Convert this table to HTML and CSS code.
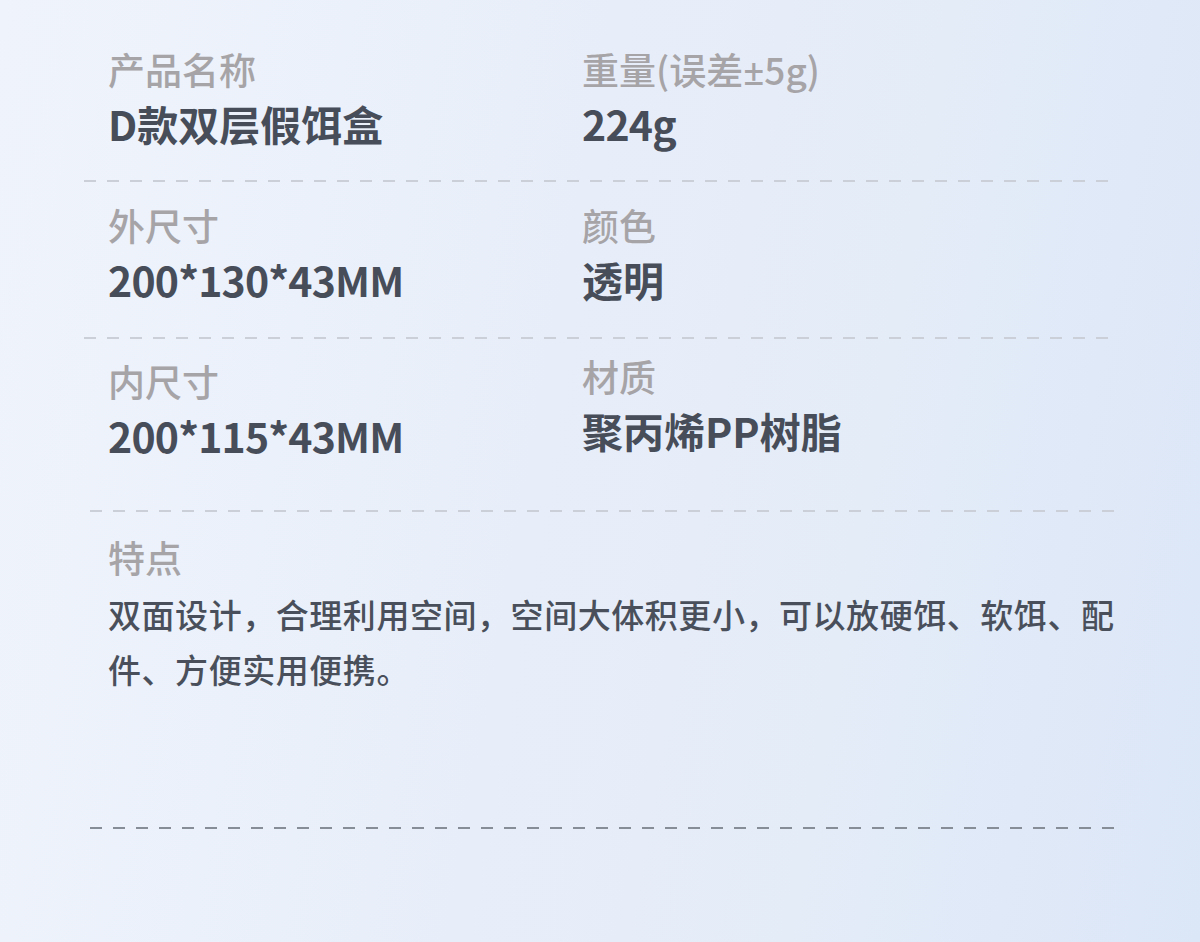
FILE: index.html
```html
<!DOCTYPE html>
<html lang="zh-CN">
<head>
  <meta charset="UTF-8" />
  <meta name="viewport" content="width=device-width, initial-scale=1" />
  <title>产品参数</title>
  <link rel="stylesheet" href="styles.css">
</head>
<body>
  <div class="spec-sheet">
    <div class="spec-row row-1">
      <div class="spec-cell">
        <div class="spec-label">产品名称</div>
        <div class="spec-value">D款双层假饵盒</div>
      </div>
      <div class="spec-cell">
        <div class="spec-label">重量(误差<span class="sym">±</span>5g)</div>
        <div class="spec-value num">224g</div>
      </div>
    </div>
    <div class="divider div-1"></div>

    <div class="spec-row row-2">
      <div class="spec-cell">
        <div class="spec-label">外尺寸</div>
        <div class="spec-value num">200*130*43MM</div>
      </div>
      <div class="spec-cell">
        <div class="spec-label">颜色</div>
        <div class="spec-value">透明</div>
      </div>
    </div>
    <div class="divider div-2"></div>

    <div class="spec-row row-3">
      <div class="spec-cell">
        <div class="spec-label">内尺寸</div>
        <div class="spec-value num">200*115*43MM</div>
      </div>
      <div class="spec-cell raised">
        <div class="spec-label">材质</div>
        <div class="spec-value">聚丙烯PP树脂</div>
      </div>
    </div>
    <div class="divider wide div-3"></div>

    <div class="feature">
      <div class="spec-label">特点</div>
      <p class="feature-text">双面设计，合理利用空间，空间大体积更小，可以放硬饵、软饵、配件、方便实用便携。</p>
    </div>
    <div class="divider wide dark"></div>
  </div>
</body>
</html>
```

FILE: styles.css
```css
html, body {
  margin: 0;
  height: 100%;
}

body {
  font-family: "Noto Sans CJK SC", "Noto Sans", sans-serif;
  background: linear-gradient(100deg, #eff4fc 0%, #e8eef9 45%, #e4ecf8 70%, #dbe6f7 100%);
  color: #474d59;
  overflow: hidden;
}

.spec-sheet {
  padding-top: 44px;
}

.spec-row {
  display: flex;
  padding-left: 108px;
}

.spec-cell {
  width: 474px;
}

.spec-cell.raised {
  margin-top: -5px;
}

.spec-label {
  font-size: 37px;
  line-height: 50px;
  height: 50px;
  font-weight: 500;
  color: #a7a4a7;
}

.spec-label .sym {
  font-family: "Noto Sans", "DejaVu Sans", sans-serif;
  line-height: 1;
}

.spec-value {
  font-size: 41px;
  line-height: 54px;
  font-weight: 700;
  color: #474d59;
  margin-top: 2px;
}

.spec-value.num {
  letter-spacing: -0.8px;
}

.divider {
  margin: 0 88px 0 84px;
  height: 2px;
  background: repeating-linear-gradient(90deg, #cbd0d8 0 12px, transparent 12px 23px);
}

.div-1 {
  margin-top: 30px;
  margin-bottom: 18px;
}

.div-2 {
  margin-top: 31px;
  margin-bottom: 17px;
}

.div-3 {
  margin-top: 48px;
  margin-bottom: 20px;
}

.divider.wide {
  margin-left: 90px;
  margin-right: 82px;
}

.divider.dark {
  margin-top: 130px;
  background: repeating-linear-gradient(90deg, #878d97 0 12px, transparent 12px 23px);
}

.feature {
  padding-left: 108px;
  padding-right: 80px;
}

.feature-text {
  margin: 5px 0 0;
  font-size: 33px;
  line-height: 55px;
  letter-spacing: 0.55px;
  font-weight: 500;
  color: #4a505b;
}
```
